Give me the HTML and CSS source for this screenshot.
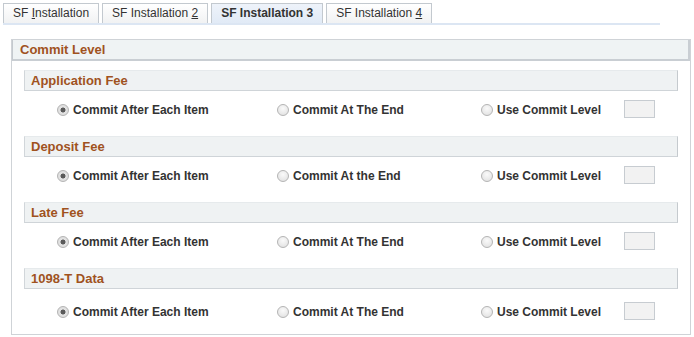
FILE: index.html
```html
<!DOCTYPE html>
<html lang="en">
<head>
  <meta charset="UTF-8">
  <title>SF Installation 3</title>
  <link rel="stylesheet" href="styles.css">
</head>
<body>
  <!-- Tabs -->
  <div class="tabs">
    <a class="tab">SF <u>I</u>nstallation</a>
    <a class="tab">SF Installation <u>2</u></a>
    <a class="tab active">SF Installation 3</a>
    <a class="tab">SF Installation <u>4</u></a>
  </div>

  <!-- Commit Level group -->
  <div class="group">
    <div class="group-title">Commit Level</div>

    <div class="section">
      <div class="section-title">Application Fee</div>
      <div class="options">
        <label class="opt opt-1"><input type="radio" class="radio" name="app" checked>Commit After Each Item</label>
        <label class="opt opt-2"><input type="radio" class="radio" name="app">Commit At The End</label>
        <label class="opt opt-3"><input type="radio" class="radio" name="app">Use Commit Level</label>
        <input type="text" class="level-input">
      </div>
    </div>

    <div class="section">
      <div class="section-title">Deposit Fee</div>
      <div class="options">
        <label class="opt opt-1"><input type="radio" class="radio" name="dep" checked>Commit After Each Item</label>
        <label class="opt opt-2"><input type="radio" class="radio" name="dep">Commit At the End</label>
        <label class="opt opt-3"><input type="radio" class="radio" name="dep">Use Commit Level</label>
        <input type="text" class="level-input">
      </div>
    </div>

    <div class="section">
      <div class="section-title">Late Fee</div>
      <div class="options">
        <label class="opt opt-1"><input type="radio" class="radio" name="late" checked>Commit After Each Item</label>
        <label class="opt opt-2"><input type="radio" class="radio" name="late">Commit At The End</label>
        <label class="opt opt-3"><input type="radio" class="radio" name="late">Use Commit Level</label>
        <input type="text" class="level-input">
      </div>
    </div>

    <div class="section last">
      <div class="section-title">1098-T Data</div>
      <div class="options">
        <label class="opt opt-1"><input type="radio" class="radio" name="t98" checked>Commit After Each Item</label>
        <label class="opt opt-2"><input type="radio" class="radio" name="t98">Commit At The End</label>
        <label class="opt opt-3"><input type="radio" class="radio" name="t98">Use Commit Level</label>
        <input type="text" class="level-input">
      </div>
    </div>
  </div>
</body>
</html>
```

FILE: styles.css
```css
body {
  margin: 0;
  padding: 0;
  font-family: "Liberation Sans", Arial, sans-serif;
  color: #333;
  background: #fff;
}

/* Tabs */
.tabs {
  display: flex;
  gap: 3px;
  width: 657px;
  margin: 3px 0 0 3px;
  border-bottom: 2px solid #dce6f3;
}

.tab {
  display: block;
  height: 19px;
  line-height: 19px;
  padding: 0 9px;
  font-size: 12px;
  color: #333;
  border: 1px solid #c3c9cf;
  border-bottom: none;
  background: linear-gradient(#ffffff, #f1f2f3);
}

.tab.active {
  font-weight: bold;
  background: linear-gradient(#eef3fa, #e1eaf6);
}

/* Group box */
.group {
  margin: 14px 3px 0 11px;
  border: 1px solid #cfd3d7;
  padding: 0 12px 14px 12px;
}

.group-title {
  margin: 0 -12px;
  height: 19px;
  line-height: 19px;
  padding-left: 7px;
  font-size: 13px;
  font-weight: bold;
  color: #a0521e;
  background: #eff3f4;
  border-left: 1px solid #c4c9ce;
  border-bottom: 2px solid #c9ced3;
  border-right: 2px solid #c9ced3;
}

.section {
  margin-top: 9px;
}

.section-title {
  height: 19px;
  line-height: 19px;
  padding-left: 6px;
  font-size: 13px;
  font-weight: bold;
  color: #a0521e;
  background: #eff2f3;
  border-top: 1px solid #e6eaec;
  border-left: 1px solid #d1d6da;
  border-right: 1px solid #c5cace;
  border-bottom: 1px solid #cfd4d8;
}

.options {
  display: flex;
  align-items: center;
  height: 18px;
  padding: 9px 0 9px 33px;
}

.section.last .options {
  padding-top: 13px;
  padding-bottom: 0;
}

.opt {
  display: flex;
  align-items: center;
  font-size: 12px;
  font-weight: bold;
  color: #333;
  margin-top: 2px;
}

.opt-1 { width: 220px; }
.opt-2 { width: 204px; }
.opt-3 { width: 143px; }

.radio {
  appearance: none;
  -webkit-appearance: none;
  width: 12px;
  height: 12px;
  margin: 0 4px 0 0;
  border-radius: 50%;
  border: 1px solid #b4b4b4;
  background: radial-gradient(circle at 50% 35%, #fafafa, #dedede);
  box-sizing: border-box;
}

.radio:checked {
  background: radial-gradient(circle, #5a5a5a 0, #5a5a5a 2.2px, #e4e4e4 2.8px, #d8d8d8 100%);
}

.level-input {
  width: 31px;
  height: 18px;
  box-sizing: border-box;
  margin: 0;
  border: 1px solid #c7ccd1;
  background: #f2f2f2;
}
```
